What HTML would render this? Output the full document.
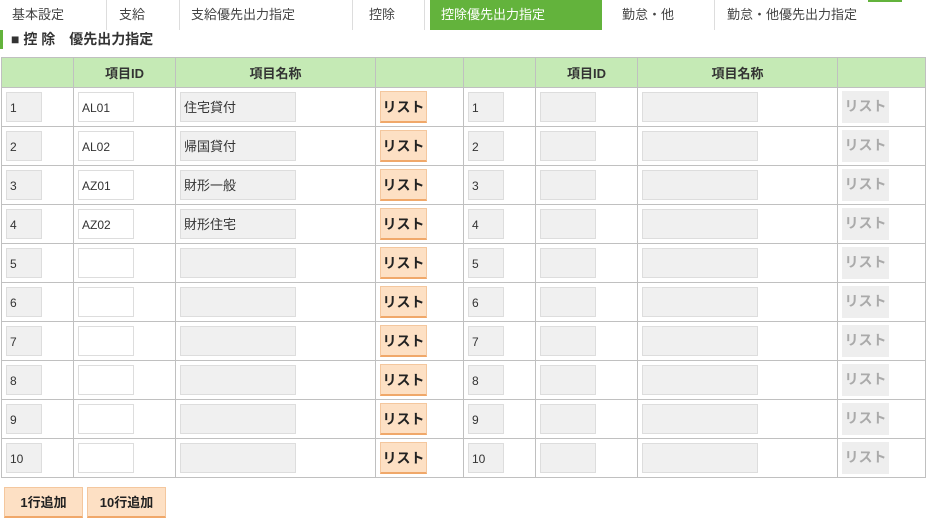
<!DOCTYPE html>
<html><head><meta charset="utf-8"><style>
body{margin:0;width:926px;height:532px;background:#fff;font-family:"Liberation Sans","Noto Sans CJK JP",sans-serif;font-size:13px;color:#333;position:relative;overflow:hidden}
.tab{position:absolute;top:0;height:30px;line-height:30px;font-size:13px;color:#444;border-right:1px solid #ddd;box-sizing:border-box}
.act{background:#63b33c;color:#fff;border:none}
.h{position:absolute;left:0;top:30px;height:19px;border-left:3px solid #63b33c;padding-left:8px;font-weight:bold;font-size:14px;line-height:19px;color:#333}
table{position:absolute;left:1px;top:57px;border-collapse:collapse}
td,th{border:1px solid #c0c0c0;padding:0 0 0 4px;height:39px;box-sizing:border-box}
th{background:#c5eab5;height:30px;font-size:13px;color:#333;text-align:center;padding:0}
.i{display:inline-block;height:30px;line-height:30px;border:1px solid #ddd;box-sizing:border-box;background:#f0f0f0;padding-left:3px;font-size:12px;vertical-align:middle}
.w{background:#fff}
.b{display:inline-block;width:47px;height:32px;line-height:30px;text-align:center;background:#fde0c4;border:1px solid #f4c79e;border-bottom:2px solid #f0a86a;box-sizing:border-box;font-weight:bold;font-size:14px;color:#222;vertical-align:middle}
.g{background:#eee;border:none;color:#aaa}
.bb{position:absolute;top:487px;height:31px;line-height:29px;width:79px;text-align:center;background:#fde0c4;border:1px solid #f4c79e;border-bottom:2px solid #f0a86a;box-sizing:border-box;font-weight:bold;font-size:13px;color:#222}
</style></head><body>
<div class="tab" style="left:0;width:107px;padding-left:12px">基本設定</div>
<div class="tab" style="left:107px;width:73px;padding-left:12px">支給</div>
<div class="tab" style="left:180px;width:173px;padding-left:11px">支給優先出力指定</div>
<div class="tab" style="left:353px;width:72px;padding-left:16px">控除</div>
<div class="tab act" style="left:430px;width:172px;padding-left:11px">控除優先出力指定</div>
<div class="tab" style="left:610px;width:105px;padding-left:12px">勤怠・他</div>
<div class="tab" style="left:715px;width:153px;padding-left:12px;border:none">勤怠・他優先出力指定</div>
<div style="position:absolute;left:868px;top:0;width:34px;height:2px;background:#63b33c"></div>
<div class="h">■ 控 除　優先出力指定</div>
<table>
<tr><th style="width:72px"></th><th style="width:102px">項目ID</th><th style="width:200px">項目名称</th><th style="width:88px"></th><th style="width:72px"></th><th style="width:102px">項目ID</th><th style="width:200px">項目名称</th><th style="width:88px"></th></tr>
<tr><td><span class="i" style="width:36px">1</span></td><td><span class="i w" style="width:56px">AL01</span></td><td><span class="i" style="width:116px;font-size:13px">住宅貸付</span></td><td><span class="b">リスト</span></td><td><span class="i" style="width:36px">1</span></td><td><span class="i" style="width:56px"></span></td><td><span class="i" style="width:116px"></span></td><td><span class="b g">リスト</span></td></tr>
<tr><td><span class="i" style="width:36px">2</span></td><td><span class="i w" style="width:56px">AL02</span></td><td><span class="i" style="width:116px;font-size:13px">帰国貸付</span></td><td><span class="b">リスト</span></td><td><span class="i" style="width:36px">2</span></td><td><span class="i" style="width:56px"></span></td><td><span class="i" style="width:116px"></span></td><td><span class="b g">リスト</span></td></tr>
<tr><td><span class="i" style="width:36px">3</span></td><td><span class="i w" style="width:56px">AZ01</span></td><td><span class="i" style="width:116px;font-size:13px">財形一般</span></td><td><span class="b">リスト</span></td><td><span class="i" style="width:36px">3</span></td><td><span class="i" style="width:56px"></span></td><td><span class="i" style="width:116px"></span></td><td><span class="b g">リスト</span></td></tr>
<tr><td><span class="i" style="width:36px">4</span></td><td><span class="i w" style="width:56px">AZ02</span></td><td><span class="i" style="width:116px;font-size:13px">財形住宅</span></td><td><span class="b">リスト</span></td><td><span class="i" style="width:36px">4</span></td><td><span class="i" style="width:56px"></span></td><td><span class="i" style="width:116px"></span></td><td><span class="b g">リスト</span></td></tr>
<tr><td><span class="i" style="width:36px">5</span></td><td><span class="i w" style="width:56px"></span></td><td><span class="i" style="width:116px"></span></td><td><span class="b">リスト</span></td><td><span class="i" style="width:36px">5</span></td><td><span class="i" style="width:56px"></span></td><td><span class="i" style="width:116px"></span></td><td><span class="b g">リスト</span></td></tr>
<tr><td><span class="i" style="width:36px">6</span></td><td><span class="i w" style="width:56px"></span></td><td><span class="i" style="width:116px"></span></td><td><span class="b">リスト</span></td><td><span class="i" style="width:36px">6</span></td><td><span class="i" style="width:56px"></span></td><td><span class="i" style="width:116px"></span></td><td><span class="b g">リスト</span></td></tr>
<tr><td><span class="i" style="width:36px">7</span></td><td><span class="i w" style="width:56px"></span></td><td><span class="i" style="width:116px"></span></td><td><span class="b">リスト</span></td><td><span class="i" style="width:36px">7</span></td><td><span class="i" style="width:56px"></span></td><td><span class="i" style="width:116px"></span></td><td><span class="b g">リスト</span></td></tr>
<tr><td><span class="i" style="width:36px">8</span></td><td><span class="i w" style="width:56px"></span></td><td><span class="i" style="width:116px"></span></td><td><span class="b">リスト</span></td><td><span class="i" style="width:36px">8</span></td><td><span class="i" style="width:56px"></span></td><td><span class="i" style="width:116px"></span></td><td><span class="b g">リスト</span></td></tr>
<tr><td><span class="i" style="width:36px">9</span></td><td><span class="i w" style="width:56px"></span></td><td><span class="i" style="width:116px"></span></td><td><span class="b">リスト</span></td><td><span class="i" style="width:36px">9</span></td><td><span class="i" style="width:56px"></span></td><td><span class="i" style="width:116px"></span></td><td><span class="b g">リスト</span></td></tr>
<tr><td><span class="i" style="width:36px">10</span></td><td><span class="i w" style="width:56px"></span></td><td><span class="i" style="width:116px"></span></td><td><span class="b">リスト</span></td><td><span class="i" style="width:36px">10</span></td><td><span class="i" style="width:56px"></span></td><td><span class="i" style="width:116px"></span></td><td><span class="b g">リスト</span></td></tr>
</table>
<div class="bb" style="left:4px">1行追加</div>
<div class="bb" style="left:87px">10行追加</div>
</body></html>
